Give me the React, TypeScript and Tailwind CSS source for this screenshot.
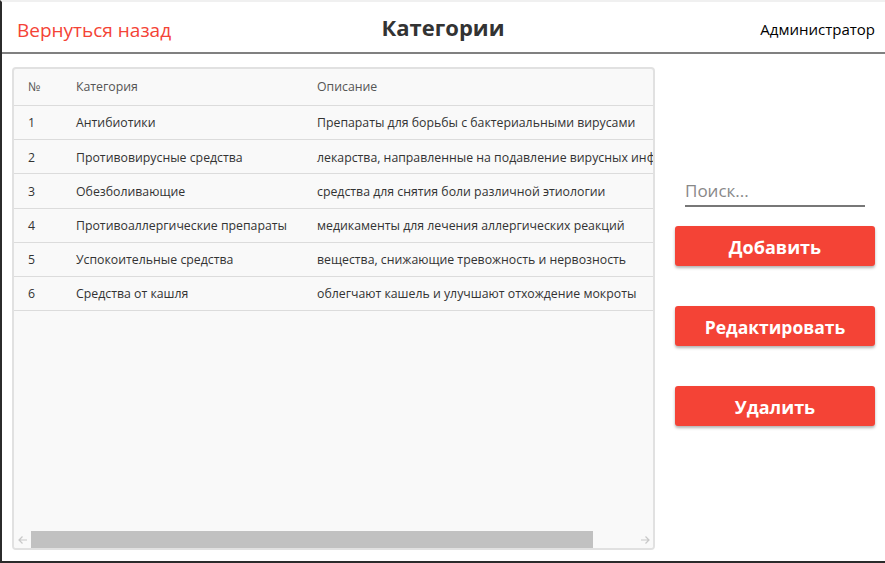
import React from "react";

const rows = [
  ["1", "Антибиотики", "Препараты для борьбы с бактериальными вирусами"],
  ["2", "Противовирусные средства", "лекарства, направленные на подавление вирусных инфекций"],
  ["3", "Обезболивающие", "средства для снятия боли различной этиологии"],
  ["4", "Противоаллергические препараты", "медикаменты для лечения аллергических реакций"],
  ["5", "Успокоительные средства", "вещества, снижающие тревожность и нервозность"],
  ["6", "Средства от кашля", "облегчают кашель и улучшают отхождение мокроты"],
];

export default function App() {
  return (
    <div
      className="w-[885px] h-[563px] bg-white flex flex-col border-l-2 border-b-2 border-[#2b2b2b] border-t-2 border-t-[#f0f0f0] overflow-hidden"
      style={{ fontFamily: '"Open Sans", "Noto Sans", sans-serif' }}
    >
      <div className="h-[52px] shrink-0 grid grid-cols-[1fr_auto_1fr] items-center border-b-2 border-[#808080] pl-[15px] pr-[10px]">
        <span className="text-[19px] font-medium text-[#f44336] pt-[6px]">Вернуться назад</span>
        <span className="text-[22px] font-bold text-[#333] pt-[1px] -ml-[6px]">Категории</span>
        <span className="text-[15px] text-black pt-[4px] text-right">Администратор</span>
      </div>
      <div className="flex flex-1 pt-[13px] pb-[11px]">
        <div className="ml-[10px] w-[643px] rounded-[4px] border-2 border-[#e1e1e1] bg-[#f9f9f9] flex flex-col overflow-hidden text-[12.3px]">
          <div className="flex-1 overflow-hidden">
            <div className="flex h-[37px] items-center pt-[1px] border-b border-[#dcdcdc] text-[#555] whitespace-nowrap">
              <div className="w-[62px] pl-[14px]">№</div>
              <div className="w-[241px]">Категория</div>
              <div>Описание</div>
            </div>
            {rows.map((r) => (
              <div key={r[0]} className="flex h-[34.2px] items-center pt-[2px] border-b border-[#dcdcdc] text-[#333] whitespace-nowrap">
                <div className="w-[62px] shrink-0 pl-[14px]">{r[0]}</div>
                <div className="w-[241px] shrink-0">{r[1]}</div>
                <div className="shrink-0">{r[2]}</div>
              </div>
            ))}
          </div>
          <div className="h-[17px] flex items-stretch bg-[#f9f9f9]">
            <div className="w-[17px] flex items-center justify-center text-[#c8c8c8]">
              <svg width="10" height="10" viewBox="0 0 10 10" fill="none" stroke="currentColor" strokeWidth="1.2">
                <path d="M9 5H1M4.5 1.5L1 5l3.5 3.5" />
              </svg>
            </div>
            <div className="w-[562px] bg-[#c1c1c1]" />
            <div className="flex-1" />
            <div className="w-[17px] flex items-center justify-center text-[#c8c8c8]">
              <svg width="10" height="10" viewBox="0 0 10 10" fill="none" stroke="currentColor" strokeWidth="1.2">
                <path d="M1 5h8M5.5 1.5L9 5 5.5 8.5" />
              </svg>
            </div>
          </div>
        </div>
        <div className="flex flex-col pl-[20px] pt-[111px]">
          <div className="ml-[10px] w-[180px] border-b-2 border-[#777] pb-[1px]">
            <span className="text-[17px] text-[#888]">Поиск...</span>
          </div>
          <button className="mt-[19px] w-[200px] h-[40px] pt-[3px] rounded-[3px] bg-[#f44336] text-white text-[18px] font-bold shadow-[0_2px_3px_rgba(0,0,0,0.3)]">
            Добавить
          </button>
          <button className="mt-[40px] w-[200px] h-[40px] pt-[3px] rounded-[3px] bg-[#f44336] text-white text-[17.5px] font-bold shadow-[0_2px_3px_rgba(0,0,0,0.3)]">
            Редактировать
          </button>
          <button className="mt-[40px] w-[200px] h-[40px] pt-[3px] rounded-[3px] bg-[#f44336] text-white text-[18px] font-bold shadow-[0_2px_3px_rgba(0,0,0,0.3)]">
            Удалить
          </button>
        </div>
      </div>
    </div>
  );
}
